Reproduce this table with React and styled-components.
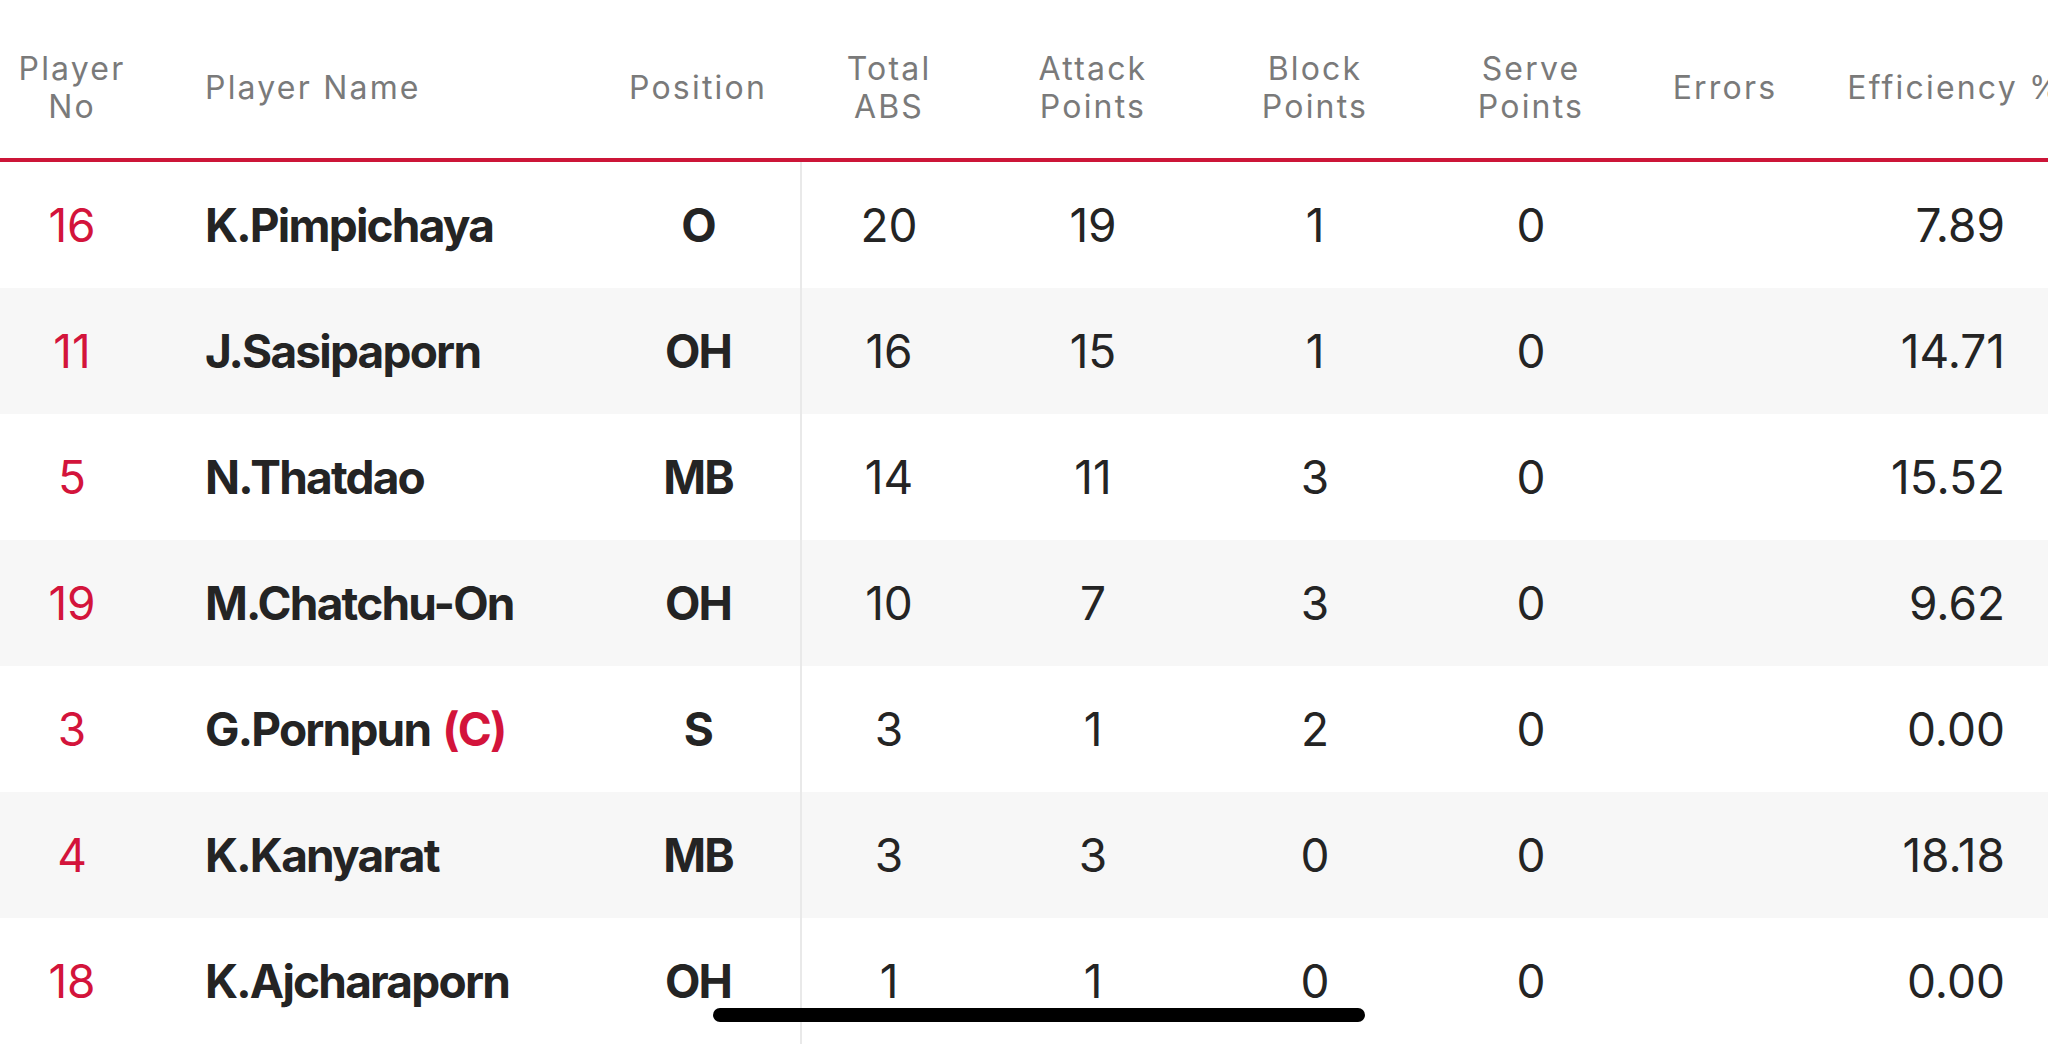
import React from 'react';
import styled, { createGlobalStyle } from 'styled-components';

const GlobalStyle = createGlobalStyle`
  html, body {
    margin: 0;
    padding: 0;
    background: #ffffff;
    overflow: hidden;
  }
  body {
    font-family: Inter, "Noto Sans", sans-serif;
    -webkit-font-smoothing: antialiased;
  }
`;

const COLUMNS = '144px 452px 204px 178px 230px 214px 218px 170px 290px';
const RED = '#d3143b';

const Screen = styled.div`
  width: 2048px;
  height: 1044px;
  position: relative;
  overflow: hidden;
  background: #ffffff;
`;

const Table = styled.div`
  width: 2100px;
`;

const HeaderRow = styled.div`
  display: grid;
  grid-template-columns: ${COLUMNS};
  height: 162px;
  box-sizing: border-box;
  padding-top: 18px;
  border-bottom: 4px solid #cc1538;
  align-items: center;
`;

const HeadCell = styled.div`
  font-size: 32px;
  line-height: 38px;
  letter-spacing: 2.2px;
  color: #7a7a7a;
  text-align: ${p => p.$align || 'center'};
  padding-left: ${p => p.$indent || 0}px;
  white-space: pre-line;
`;

const Row = styled.div`
  display: grid;
  grid-template-columns: ${COLUMNS};
  height: 126px;
  align-items: stretch;
  background: ${p => (p.$striped ? '#f7f7f7' : '#ffffff')};
`;

const Cell = styled.div`
  display: flex;
  align-items: center;
  justify-content: ${p => p.$justify || 'center'};
  padding-left: ${p => p.$indent || 0}px;
  padding-right: ${p => p.$endPad || 0}px;
  font-size: 46px;
  font-weight: ${p => (p.$bold ? 700 : 400)};
  letter-spacing: ${p => (p.$bold ? '-1.8px' : '0')};
  color: ${p => (p.$red ? RED : '#242424')};
  box-shadow: ${p => (p.$divider ? 'inset 2px 0 0 #e9e9e9' : 'none')};
  white-space: nowrap;
`;

const Captain = styled.span`
  color: ${RED};
  margin-left: 12px;
`;

const HomeIndicator = styled.div`
  position: absolute;
  left: 713px;
  top: 1008px;
  width: 652px;
  height: 14px;
  border-radius: 7px;
  background: #000000;
`;

const headers = [
  { label: 'Player\nNo' },
  { label: 'Player Name', align: 'left', indent: 61 },
  { label: 'Position' },
  { label: 'Total\nABS' },
  { label: 'Attack\nPoints' },
  { label: 'Block\nPoints' },
  { label: 'Serve\nPoints' },
  { label: 'Errors' },
  { label: 'Efficiency %' },
];

const players = [
  { no: 16, name: 'K.Pimpichaya', pos: 'O', abs: 20, attack: 19, block: 1, serve: 0, eff: '7.89' },
  { no: 11, name: 'J.Sasipaporn', pos: 'OH', abs: 16, attack: 15, block: 1, serve: 0, eff: '14.71' },
  { no: 5, name: 'N.Thatdao', pos: 'MB', abs: 14, attack: 11, block: 3, serve: 0, eff: '15.52' },
  { no: 19, name: 'M.Chatchu-On', pos: 'OH', abs: 10, attack: 7, block: 3, serve: 0, eff: '9.62' },
  { no: 3, name: 'G.Pornpun', captain: true, pos: 'S', abs: 3, attack: 1, block: 2, serve: 0, eff: '0.00' },
  { no: 4, name: 'K.Kanyarat', pos: 'MB', abs: 3, attack: 3, block: 0, serve: 0, eff: '18.18' },
  { no: 18, name: 'K.Ajcharaporn', pos: 'OH', abs: 1, attack: 1, block: 0, serve: 0, eff: '0.00' },
];

export default function App() {
  return (
    <Screen>
      <GlobalStyle />
      <Table>
        <HeaderRow>
          {headers.map((h, i) => (
            <HeadCell key={i} $align={h.align} $indent={h.indent}>
              {h.label}
            </HeadCell>
          ))}
        </HeaderRow>

        {players.map((p, idx) => (
          <Row key={p.no} $striped={idx % 2 === 1}>
            <Cell $red>{p.no}</Cell>
            <Cell $bold $justify="flex-start" $indent={61}>
              {p.name}
              {p.captain && <Captain>(C)</Captain>}
            </Cell>
            <Cell $bold>{p.pos}</Cell>
            <Cell $divider>{p.abs}</Cell>
            <Cell>{p.attack}</Cell>
            <Cell>{p.block}</Cell>
            <Cell>{p.serve}</Cell>
            <Cell />
            <Cell $justify="flex-end" $endPad={95}>{p.eff}</Cell>
          </Row>
        ))}
      </Table>
      <HomeIndicator />
    </Screen>
  );
}
